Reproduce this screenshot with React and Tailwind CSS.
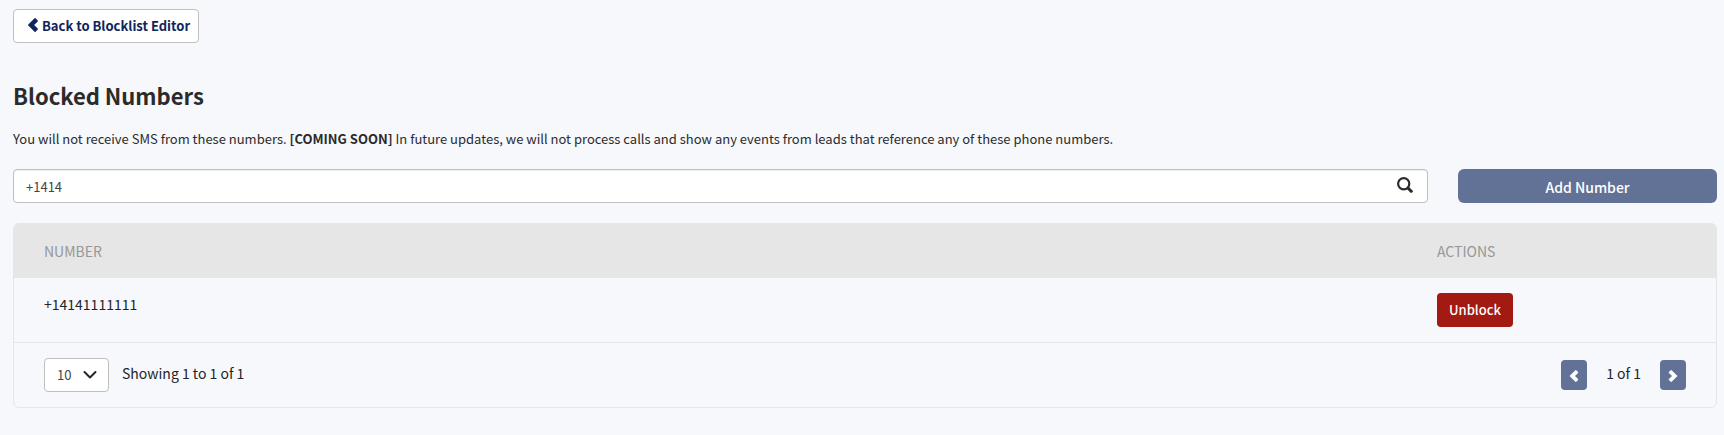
import React, { useState } from 'react';

function ChevronLeft({ className }) {
  return (
    <svg viewBox="0 0 1200 1200" fill="currentColor" className={className} aria-hidden="true">
      <path d="M178 600q0-26 18-44L734 18q18-18 43-18t43 18l187 187q18 18 18 43t-18 43L698 600l309 309q18 18 18 43t-18 43l-187 187q-18 18-43 18t-43-18L196 644q-18-18-18-44z" />
    </svg>
  );
}

function BlockedNumbers() {
  const [numbers, setNumbers] = useState(['+14141111111']);
  const [search, setSearch] = useState('+1414');
  const [pageSize, setPageSize] = useState('10');

  const filtered = numbers.filter((number) => number.includes(search));

  const handleUnblock = (number) => {
    setNumbers(numbers.filter((n) => n !== number));
  };

  return (
    <div className="min-h-screen bg-[#f7f8fc] pt-[9px] pr-[7px] pb-6 pl-[13px] font-['Noto_Sans_CJK_SC',sans-serif] text-[#212529]">
      <a
        href="#blocklist"
        className="inline-flex h-[34px] items-center gap-[2px] rounded border border-[#bfbfbf] bg-white pr-2 pl-3 text-[13px] font-bold text-[#0f265c]"
      >
        <ChevronLeft className="mb-[2px] size-[14px]" />
        Back to Blocklist Editor
      </a>

      <h1 className="mt-9 text-[22px] leading-8 font-bold text-[#2b2b2b]">Blocked Numbers</h1>
      <p className="mt-[18px] text-[13px] leading-5 text-[#2b2b2b]">
        You will not receive SMS from these numbers. <b>[COMING SOON]</b> In future updates, we will not process calls
        and show any events from leads that reference any of these phone numbers.
      </p>

      <div className="mt-5 grid grid-cols-12 gap-[30px]">
        <div className="relative col-span-10">
          <input
            type="text"
            aria-label="Search numbers"
            value={search}
            onChange={(e) => setSearch(e.target.value)}
            className="block h-[34px] w-full rounded border border-[#bfbfbf] bg-white px-3 text-[13px] text-[#444] shadow-[inset_0_1px_1px_rgba(0,0,0,0.075)] outline-none"
          />
          <svg viewBox="0 0 16 16" fill="none" stroke="#2b2b2b" className="absolute top-2 right-[15px] size-4">
            <circle cx="6.7" cy="6.7" r="5.6" strokeWidth="2.2" />
            <path d="M10.6 10.600L15.200 15.200" strokeWidth="3" />
          </svg>
        </div>
        <button className="col-span-2 h-[34px] rounded-md bg-[#627196] pt-[2px] text-[14px] font-medium text-white">
          Add Number
        </button>
      </div>

      <div className="mt-5 overflow-hidden rounded-md border border-[#e6e6e6]">
        <table className="w-full table-fixed text-left text-[14px] leading-5">
          <thead>
            <tr className="h-[54px] bg-[#e6e6e6] text-[#979797]">
              <th className="pl-[30px] font-normal">NUMBER</th>
              <th className="w-[279px] font-normal">ACTIONS</th>
            </tr>
          </thead>
          <tbody>
            {filtered.map((number) => (
              <tr key={number} className="border-b border-[#e6e6e6] align-top">
                <td className="pt-4 pl-[30px]">{number}</td>
                <td className="py-[15px]">
                  <button
                    onClick={() => handleUnblock(number)}
                    className="block h-[34px] rounded bg-[#a31a12] px-3 text-[13px] font-medium text-white"
                  >
                    Unblock
                  </button>
                </td>
              </tr>
            ))}
          </tbody>
        </table>

        <div className="flex items-center justify-between px-[30px] py-[15px] text-[14px] leading-5">
          <div className="flex items-center gap-[13px]">
            <div className="relative">
              <select
                aria-label="Rows per page"
                value={pageSize}
                onChange={(e) => setPageSize(e.target.value)}
                className="block h-[34px] w-[65px] appearance-none rounded border border-[#bfbfbf] bg-white pl-3 text-[13px] text-[#444]"
              >
                <option>10</option>
                <option>25</option>
                <option>50</option>
              </select>
              <svg
                viewBox="0 0 16 16"
                fill="none"
                stroke="#212529"
                strokeWidth="2"
                strokeLinecap="round"
                strokeLinejoin="round"
                className="pointer-events-none absolute top-[9px] right-[11px] size-4"
              >
                <path d="M2.5 5L8 10.500L13.500 5" />
              </svg>
            </div>
            <span className="pb-1">
              Showing 1 to {filtered.length} of {filtered.length}
            </span>
          </div>
          <div className="flex items-center gap-[19px]">
            <button
              aria-label="Previous page"
              className="flex h-[30px] w-[26px] items-center justify-center rounded bg-[#627196] pt-[2px] text-white"
            >
              <ChevronLeft className="size-3" />
            </button>
            <span className="pb-1">1 of 1</span>
            <button
              aria-label="Next page"
              className="flex h-[30px] w-[26px] items-center justify-center rounded bg-[#627196] pt-[2px] text-white"
            >
              <ChevronLeft className="size-3 rotate-180" />
            </button>
          </div>
        </div>
      </div>
    </div>
  );
}

export default BlockedNumbers;
